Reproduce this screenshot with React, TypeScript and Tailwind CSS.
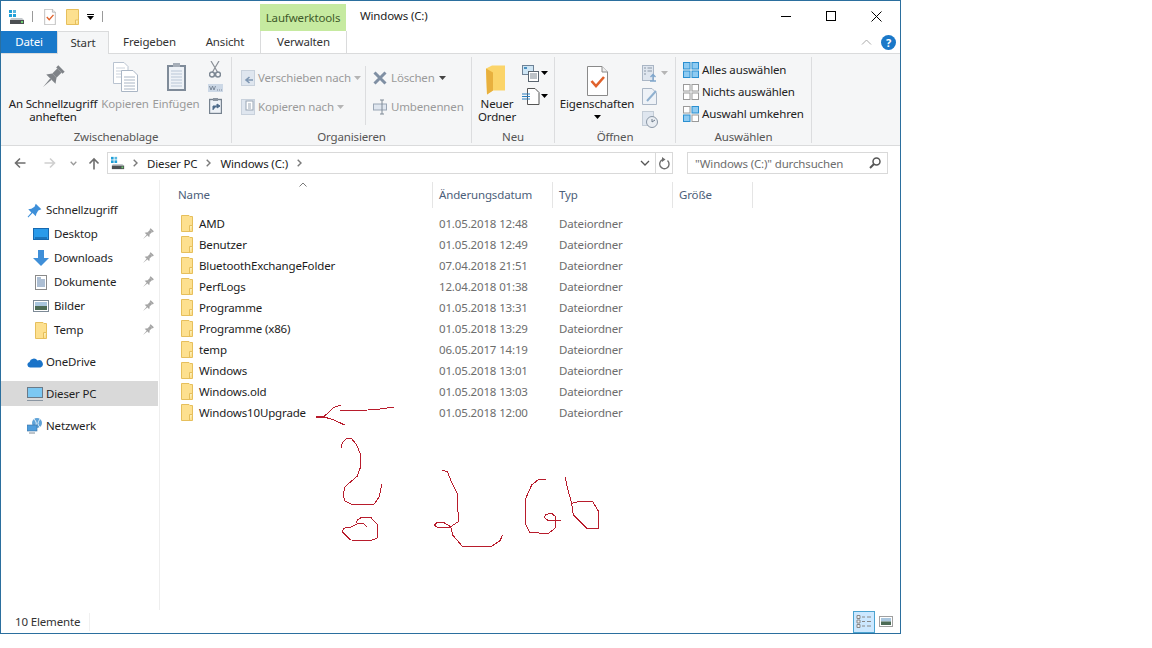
import React from "react";

const Pin = ({ size, color }: { size: number; color: string }) => (
  <svg width={size} height={size} viewBox="0 0 24 24">
    <g transform="rotate(45 12 12)" fill={color}>
      <rect x="7.5" y="0" width="9" height="3" />
      <rect x="9" y="3" width="6" height="7" />
      <path d="M5.5 15 L9 10 H15 L18.5 15 Z" />
      <path d="M11 15 H13 L12 26 Z" />
    </g>
  </svg>
);

const FolderSmall = () => (
  <svg width="14" height="17" viewBox="0 0 14 17" className="shrink-0">
    <path d="M1.5 .5 H9 L10 1.5 H12.5 V16.5 H1.5 Z" fill="#fde08f" stroke="#e6bf5c" />
    <path d="M9.5 16 V10.5 H12.5" fill="#fbeeb8" stroke="#e6bf5c" />
  </svg>
);

const Drive = ({ w = 16 }: { w?: number }) => (
  <svg width={w} height="14" viewBox="0 0 16 14" className="shrink-0">
    <rect x="0" y="0" width="3" height="3" fill="#1f9fd8" />
    <rect x="4" y="0" width="3" height="3" fill="#5bb8e0" />
    <rect x="0" y="4" width="3" height="3" fill="#1f9fd8" />
    <rect x="4" y="4" width="3" height="3" fill="#1f9fd8" />
    <path d="M2 8 H13 L15 10 H1 Z" fill="#c4c8cc" />
    <rect x="1" y="10" width="14" height="4" fill="#4c4f52" />
    <rect x="12" y="11" width="2" height="2" fill="#6fd06f" />
  </svg>
);

const Caret = ({ c = "#000" }: { c?: string }) => (
  <svg width="7" height="4" viewBox="0 0 7 4" className="shrink-0">
    <path d="M0 0 H7 L3.5 4 Z" fill={c} />
  </svg>
);

const Chev = ({ c = "#7a7a7a" }: { c?: string }) => (
  <svg width="5" height="8" viewBox="0 0 5 8" className="shrink-0 mx-[8px]">
    <path d="M.7 .7 L4 4 L.7 7.3" fill="none" stroke={c} strokeWidth="1.4" />
  </svg>
);

const CheckDoc = ({ w, h }: { w: number; h: number }) => (
  <svg width={w} height={h} viewBox="0 0 21 30" className="shrink-0">
    <path d="M.5 .5 H15 L20.5 6 V29.5 H.5 Z" fill="#fff" stroke="#8a8a8a" />
    <path d="M15 .5 V6 H20.5" fill="#eee" stroke="#8a8a8a" />
    <path d="M4.5 15 L9 20 L17 11" fill="none" stroke="#e0622c" strokeWidth="2.6" />
  </svg>
);

const Big = ({
  w,
  icon,
  children,
  disabled,
}: {
  w: string;
  icon: React.ReactNode;
  children: React.ReactNode;
  disabled?: boolean;
}) => (
  <div className={`${w} flex flex-col items-center shrink-0`}>
    <div className="h-[40px] flex items-center justify-center">{icon}</div>
    <div className={`text-center leading-[13px] whitespace-nowrap ${disabled ? "text-[#9a9a9a]" : "text-[#222]"}`}>
      {children}
    </div>
  </div>
);

const Group = ({ w, label, children }: { w: string; label: string; children: React.ReactNode }) => (
  <div className={`${w} shrink-0 h-[86px] border-r border-[#dcdddf] flex flex-col`}>
    <div className="h-[74px] shrink-0 flex">{children}</div>
    <div className="h-[12px] shrink-0 leading-[12px] text-center text-[#555]">{label}</div>
  </div>
);

const PagesIcon = () => (
  <svg width="25" height="30" viewBox="0 0 25 30">
    <path d="M.5 .5 H11 L15 4.5 V21.5 H.5 Z" fill="#fff" stroke="#b9c3d0" />
    <path d="M3 6 H12 M3 9 H12 M3 12 H12 M3 15 H12" stroke="#ccd3dc" />
    <path d="M8.5 8.5 H20 L24.5 13 V29.5 H8.5 Z" fill="#fff" stroke="#aab6c5" />
    <path d="M11 15 H22 M11 18 H22 M11 21 H22 M11 24 H22 M11 27 H22" stroke="#aab6c5" />
  </svg>
);

const ClipIcon = () => (
  <svg width="21" height="30" viewBox="0 0 21 30">
    <rect x="1" y="3" width="19" height="26" fill="#7f8b99" />
    <rect x="3" y="5" width="15" height="22" fill="#eef2f7" />
    <path d="M5 9 H16 M5 12 H16 M5 15 H16 M5 18 H16 M5 21 H16 M5 24 H16" stroke="#b9c6d6" />
    <rect x="7" y="1" width="7" height="4" fill="#a6aeb8" />
  </svg>
);

const FileRow = ({ name, date }: { name: string; date: string }) => (
  <div className="flex h-[21px] items-center text-[#1c1c1c]">
    <div className="w-[258px] flex items-center gap-[5px] -ml-[1px] mr-[1px] shrink-0">
      <FolderSmall />
      <span>{name}</span>
    </div>
    <div className="w-[120px] text-[#6d6d6d] shrink-0">{date}</div>
    <div className="text-[#6d6d6d]">Dateiordner</div>
  </div>
);

const NavRow = ({
  icon,
  label,
  pin,
  sub,
  active,
}: {
  icon: React.ReactNode;
  label: string;
  pin?: boolean;
  sub?: boolean;
  active?: boolean;
}) => (
  <div className={`flex items-center ${active ? "bg-[#d9d9d9] h-[25px]" : "h-[24px]"}`}>
    <div className={`${sub ? "w-[53px] pl-[27px]" : "w-[45px] pl-[22px]"} shrink-0 flex items-center justify-center`}>{icon}</div>
    <span className="flex-1 text-[#1f1f1f]">{label}</span>
    {pin && (
      <span className="mr-[2px] w-[16px] flex justify-center">
        <Pin size={12} color="#a3a3a3" />
      </span>
    )}
  </div>
);

const files: [string, string][] = [
  ["AMD", "01.05.2018 12:48"],
  ["Benutzer", "01.05.2018 12:49"],
  ["BluetoothExchangeFolder", "07.04.2018 21:51"],
  ["PerfLogs", "12.04.2018 01:38"],
  ["Programme", "01.05.2018 13:31"],
  ["Programme (x86)", "01.05.2018 13:29"],
  ["temp", "06.05.2017 14:19"],
  ["Windows", "01.05.2018 13:01"],
  ["Windows.old", "01.05.2018 13:03"],
  ["Windows10Upgrade", "01.05.2018 12:00"],
];

const SelIcon = ({ on }: { on: boolean[] }) => (
  <svg width="16" height="16" viewBox="0 0 16 16" className="shrink-0">
    {[
      [0, 0],
      [8.5, 0],
      [0, 8.5],
      [8.5, 8.5],
    ].map(([x, y], i) => (
      <rect
        key={i}
        x={x + 0.5}
        y={y + 0.5}
        width="6.5"
        height="6.5"
        fill={on[i] ? "#8ecbf2" : "#fff"}
        stroke={on[i] ? "#2a8fd0" : "#9a9a9a"}
      />
    ))}
  </svg>
);

export default function App() {
  return (
    <div
      className="relative w-[1152px] h-[648px] bg-white text-[11.5px] tracking-[-0.15px] overflow-hidden"
      style={{ fontFamily: '"Noto Sans", sans-serif' }}
    >
      <div className="w-[901px] h-[634px] border border-[#2b6f9e] flex flex-col">
        {/* title row */}
        <div className="h-[30px] flex shrink-0">
          <div className="w-[259px] shrink-0 flex items-center pl-[8px] pt-[1px]">
            <Drive />
            <span className="ml-[7px] w-px h-[11px] bg-[#9a9a9a]" />
            <span className="ml-[11px]"><CheckDoc w={12} h={16} /></span>
            <span className="ml-[10px]">
              <svg width="13" height="16" viewBox="0 0 13 16">
                <path d="M.5 .5 H12.5 V15.5 H.5 Z" fill="#fde08f" stroke="#e6bf5c" />
                <path d="M9.5 15 V11 H12.5" fill="#fbeeb8" stroke="#e6bf5c" />
              </svg>
            </span>
            <span className="ml-[8px] flex flex-col items-center gap-[1px]">
              <span className="w-[7px] h-px bg-black" />
              <Caret />
            </span>
            <span className="ml-[8px] w-px h-[11px] bg-[#9a9a9a]" />
          </div>
          <div className="w-[86px] h-[27px] mt-[3px] bg-[#c6eaa0] flex items-center justify-center text-[#3f5a2a] shrink-0">
            Laufwerktools
          </div>
          <div className="ml-[14px] flex-1 flex items-center text-[#222]">Windows (C:)</div>
          <div className="flex items-center pr-[18px] gap-[35px]">
            <span className="w-[10px] h-px bg-black" />
            <span className="w-[10px] h-[10px] border border-black" />
            <svg width="11" height="11" viewBox="0 0 11 11">
              <path d="M.5 .5 L10.5 10.5 M10.5 .5 L.5 10.5" stroke="#000" />
            </svg>
          </div>
        </div>
        {/* tabs row */}
        <div className="h-[23px] flex shrink-0 border-b border-[#dadbdc] items-stretch text-[#333]">
          <div className="w-[56px] bg-[#1979ca] text-white flex items-center justify-center">Datei</div>
          <div className="w-[52px] h-[23px] bg-[#f5f6f7] border border-b-0 border-[#dadbdc] flex items-center justify-center">
            Start
          </div>
          <div className="w-[81px] flex items-center justify-center">Freigeben</div>
          <div className="w-[70px] flex items-center justify-center">Ansicht</div>
          <div className="w-[87px] bg-white border-x border-[#dadbdc] flex items-center justify-center">Verwalten</div>
          <div className="flex-1 flex items-center justify-end pr-[4px] gap-[9px]">
            <svg width="11" height="6" viewBox="0 0 11 6">
              <path d="M1 5.5 L5.5 1 L10 5.5" fill="none" stroke="#a8a8a8" />
            </svg>
            <span className="w-[15px] h-[15px] rounded-full bg-[#1a78c8] text-white font-bold text-[11px] leading-[15px] text-center">
              ?
            </span>
          </div>
        </div>
        {/* ribbon */}
        <div className="h-[92px] shrink-0 bg-[#f5f6f7] border-b border-[#dadbdc] flex items-center">
          <Group w="w-[231px]" label="Zwischenablage">
            <Big w="w-[96px] ml-[4px]" icon={<Pin size={24} color="#7f8388" />}>
              An Schnellzugriff
              <br />
              anheften
            </Big>
            <Big w="w-[48px]" disabled icon={<PagesIcon />}>Kopieren</Big>
            <Big w="w-[54px]" disabled icon={<ClipIcon />}>Einfügen</Big>
            <div className="flex flex-col items-center pt-[4px] gap-[6px] w-[22px] ml-[1px]">
              <svg width="12" height="17" viewBox="0 0 12 17">
                <path d="M2 0 L8.5 11 M10 0 L3.5 11" stroke="#8a8f96" strokeWidth="1.2" />
                <circle cx="3" cy="13.5" r="2.5" fill="none" stroke="#7d8894" strokeWidth="1.5" />
                <circle cx="9" cy="13.5" r="2.5" fill="none" stroke="#7d8894" strokeWidth="1.5" />
              </svg>
              <svg width="15" height="8" viewBox="0 0 15 8">
                <rect width="15" height="8" fill="#ccd8e6" />
                <path d="M1.5 2 L3 6 L4.5 2 L6 6 L7.5 2 M9 6 H10 M11 6 H12 M13 6 H14" stroke="#6c7a8a" fill="none" strokeWidth=".8" />
              </svg>
              <svg width="13" height="16" viewBox="0 0 13 16">
                <rect x=".5" y="1.5" width="12" height="14" fill="#eef2f7" stroke="#76828f" strokeWidth="1.4" />
                <rect x="4" y="0" width="5" height="3" fill="#8a94a0" />
                <path d="M4 12 V8 H8 M8 6 L11 8 L8 10 Z" fill="#4d6a8a" stroke="#4d6a8a" />
              </svg>
            </div>
          </Group>
          <Group w="w-[240px]" label="Organisieren">
            <div className="w-[133px] shrink-0 pl-[9px] pt-[10px] flex flex-col gap-[7px] text-[#9a9a9a]">
              <div className="h-[22px] flex items-center gap-[3px] whitespace-nowrap">
                <svg width="14" height="16" viewBox="0 0 14 16" className="shrink-0">
                  <rect x=".5" y=".5" width="13" height="15" fill="#dfe6ef" stroke="#c8d1dc" />
                  <path d="M12 10 H6 M8.5 7 L5 10 L8.5 13" stroke="#7f97b3" strokeWidth="1.6" fill="none" />
                </svg>
                <span>Verschieben nach</span>
                <Caret c="#b5b5b5" />
              </div>
              <div className="h-[22px] flex items-center gap-[3px] whitespace-nowrap">
                <svg width="14" height="16" viewBox="0 0 14 16" className="shrink-0">
                  <rect x=".5" y=".5" width="13" height="15" fill="#dfe6ef" stroke="#c8d1dc" />
                  <rect x="5" y="2" width="7" height="9" fill="#fff" stroke="#9aa6b5" />
                  <path d="M7 5 H10 M7 7 H10 M7 9 H10" stroke="#9aa6b5" />
                </svg>
                <span>Kopieren nach</span>
                <Caret c="#b5b5b5" />
              </div>
            </div>
            <div className="w-px h-[59px] mt-[9px] bg-[#dcdddf] shrink-0" />
            <div className="pl-[7px] pt-[10px] flex flex-col gap-[7px] text-[#9a9a9a]">
              <div className="h-[22px] flex items-center gap-[4px]">
                <svg width="14" height="14" viewBox="0 0 14 14" className="shrink-0">
                  <path d="M1.5 1.5 L12.5 12.5 M12.5 1.5 L1.5 12.5" stroke="#7f8fa3" strokeWidth="3" />
                </svg>
                <span>Löschen</span>
                <Caret c="#444" />
              </div>
              <div className="h-[22px] flex items-center gap-[4px] whitespace-nowrap">
                <svg width="14" height="16" viewBox="0 0 14 16" className="shrink-0">
                  <rect x=".5" y="5" width="13" height="6" fill="#dfe6ef" stroke="#9aa6b5" />
                  <path d="M9 1 V15 M7 1 H11 M7 15 H11" stroke="#7f8a96" fill="none" />
                </svg>
                <span>Umbenennen</span>
              </div>
            </div>
          </Group>
          <Group w="w-[83px]" label="Neu">
            <Big
              w="w-[50px]"
              icon={
                <svg width="20" height="31" viewBox="0 0 20 30" className="mt-[7px] -ml-[3px]">
                  <path d="M0 3 L6 0 H19 V25 H7 L1 29 Z" fill="#fbd469" />
                  <path d="M0 3 L7 7 V25 L1 29 Z" fill="#e8b03e" />
                </svg>
              }
            >
              Neuer
              <br />
              Ordner
            </Big>
            <div className="flex flex-col pt-[8px] gap-[6px]">
              <div className="flex items-center gap-[1px]">
                <svg width="18" height="17" viewBox="0 0 18 17">
                  <rect x=".5" y=".5" width="11" height="9" fill="#cfe6f5" stroke="#6e8296" />
                  <rect x="2" y="2" width="3" height="2" fill="#4a90c0" />
                  <rect x="6.5" y="6.5" width="10" height="10" fill="#fff" stroke="#5a6570" />
                  <path d="M8 9 H15 M8 11 H15 M8 13 H15" stroke="#7a8590" />
                </svg>
                <Caret />
              </div>
              <div className="flex items-center gap-[1px]">
                <svg width="18" height="17" viewBox="0 0 18 17">
                  <path d="M5.5 .5 H13 L17 4.5 V16.5 H5.5 Z" fill="#fff" stroke="#555" />
                  <path d="M0 6 H8 M0 8.5 H8 M0 11 H8" stroke="#2a7fc0" />
                </svg>
                <Caret />
              </div>
            </div>
          </Group>
          <Group w="w-[121px]" label="Öffnen">
            <div className="w-[84px] shrink-0 flex flex-col items-center text-[#222]">
              <div className="h-[40px] flex items-center">
                <span className="mt-[8px]"><CheckDoc w={21} h={30} /></span>
              </div>
              <div className="leading-[13px] whitespace-nowrap">Eigenschaften</div>
              <div className="mt-[5px] leading-none"><Caret /></div>
            </div>
            <div className="pl-[3px] pt-[8px] flex flex-col gap-[6px]">
              <div className="flex items-center gap-[3px] h-[17px]">
                <svg width="16" height="17" viewBox="0 0 16 17">
                  <rect x=".5" y=".5" width="11" height="15" fill="#dfe6ef" stroke="#aab6c5" />
                  <path d="M2 3 H4 M5.5 3 H10 M2 6 H4 M5.5 6 H10 M2 9 H4" stroke="#8a97a6" />
                  <path d="M8 16 H14 M11 10 V16 M8.5 12 L11 9.5 L13.5 12" stroke="#7fa6cc" fill="none" strokeWidth="1.3" />
                </svg>
                <Caret c="#b5b5b5" />
              </div>
              <svg width="16" height="17" viewBox="0 0 16 17">
                <path d="M.5 .5 H10 L14.5 5 V16.5 H.5 Z" fill="#eef2f7" stroke="#aab6c5" />
                <path d="M5 13 L14 3" stroke="#8fb0cf" strokeWidth="2" />
              </svg>
              <svg width="16" height="17" viewBox="0 0 16 17">
                <rect x=".5" y=".5" width="11" height="14" fill="#dfe6ef" stroke="#c3ccd6" />
                <circle cx="10" cy="11" r="5.5" fill="#e9edf2" stroke="#8a97a6" />
                <path d="M10 8 V11 L13 9" stroke="#6c7a8a" fill="none" />
              </svg>
            </div>
          </Group>
          <Group w="w-[136px]" label="Auswählen">
            <div className="pl-[7px] pt-[2px] flex flex-col text-[#222]">
              <div className="h-[22px] flex items-center gap-[3px] whitespace-nowrap">
                <SelIcon on={[true, true, true, true]} />
                <span>Alles auswählen</span>
              </div>
              <div className="h-[22px] flex items-center gap-[3px] whitespace-nowrap">
                <SelIcon on={[false, false, false, false]} />
                <span>Nichts auswählen</span>
              </div>
              <div className="h-[22px] flex items-center gap-[3px] whitespace-nowrap">
                <SelIcon on={[false, true, true, false]} />
                <span>Auswahl umkehren</span>
              </div>
            </div>
          </Group>
        </div>
        {/* address bar */}
        <div className="h-[34px] shrink-0 flex items-start pt-[6px]">
          <div className="w-[106px] h-[22px] shrink-0 flex items-center pl-[13px]">
            <svg width="12" height="12" viewBox="0 0 12 12">
              <path d="M11.5 6 H1.5 M6 1.5 L1.5 6 L6 10.5" fill="none" stroke="#6e6e6e" strokeWidth="1.6" />
            </svg>
            <svg width="12" height="12" viewBox="0 0 12 12" className="ml-[18px]">
              <path d="M.5 6 H10.5 M6 1.5 L10.5 6 L6 10.5" fill="none" stroke="#cfcfcf" strokeWidth="1.6" />
            </svg>
            <svg width="7" height="5" viewBox="0 0 7 5" className="ml-[14px]">
              <path d="M.7 .7 L3.5 3.7 L6.3 .7" fill="none" stroke="#9a9a9a" strokeWidth="1.3" />
            </svg>
            <svg width="12" height="13" viewBox="0 0 12 13" className="ml-[11px]">
              <path d="M6 12.5 V2 M1.5 6.5 L6 2 L10.5 6.5" fill="none" stroke="#6e6e6e" strokeWidth="1.6" />
            </svg>
          </div>
          <div className="w-[566px] h-[22px] shrink-0 border border-[#d9d9d9] flex items-center pl-[3px] text-[#222]">
            <Drive w={14} />
            <Chev />
            <span className="px-[1px] pt-[2px]">Dieser PC</span>
            <Chev />
            <span className="px-[1px] pt-[2px]">Windows (C:)</span>
            <Chev />
            <span className="flex-1" />
            <svg width="10" height="6" viewBox="0 0 10 6" className="mr-[5px]">
              <path d="M1 1 L5 5 L9 1" fill="none" stroke="#555" strokeWidth="1.3" />
            </svg>
            <span className="w-[17px] h-[20px] border-l border-[#d9d9d9] flex items-center justify-center">
              <svg width="12" height="13" viewBox="0 0 12 13">
                <path d="M9.5 3.5 A4.7 4.7 0 1 1 5 2.5" fill="none" stroke="#6e6e6e" strokeWidth="1.4" />
                <path d="M4 0 L7.5 2.5 L4 5 Z" fill="#6e6e6e" />
              </svg>
            </span>
          </div>
          <div className="ml-[14px] w-[201px] h-[22px] shrink-0 border border-[#d9d9d9] flex items-center pl-[7px] pr-[6px] text-[#6d6d6d]">
            <span className="flex-1 whitespace-nowrap pt-[2px]">"Windows (C:)" durchsuchen</span>
            <svg width="12" height="12" viewBox="0 0 12 12">
              <circle cx="7.5" cy="4.5" r="3.5" fill="none" stroke="#555" strokeWidth="1.5" />
              <path d="M5 7 L1 11" stroke="#555" strokeWidth="2" />
            </svg>
          </div>
        </div>
        {/* main */}
        <div className="flex-1 flex min-h-0">
          <div className="w-[157px] shrink-0 flex flex-col pt-[18px]">
            <NavRow
              icon={
                <svg width="15" height="15" viewBox="0 0 24 24">
                  <path d="M14 1 L23 10 L18 12 L15 17 L14 21 L9 16 L2 23 L1 22 L7 15 L2 10 L7 9 L12 6 Z" fill="#3d8fd9" />
                </svg>
              }
              label="Schnellzugriff"
            />
            <NavRow
              sub
              pin
              icon={
                <svg width="16" height="12" viewBox="0 0 16 12">
                  <rect x=".5" y=".5" width="15" height="11" fill="#2a9bea" stroke="#1668b0" />
                  <path d="M2 10 H14" stroke="#0f4f8a" />
                </svg>
              }
              label="Desktop"
            />
            <NavRow
              sub
              pin
              icon={
                <svg width="16" height="16" viewBox="0 0 16 16">
                  <path d="M5 0 H11 V8 H16 L8 16 L0 8 H5 Z" fill="#3f8fd8" />
                </svg>
              }
              label="Downloads"
            />
            <NavRow
              sub
              pin
              icon={
                <svg width="12" height="15" viewBox="0 0 12 15">
                  <rect x=".5" y=".5" width="11" height="14" fill="#fff" stroke="#8a8a8a" />
                  <path d="M2 3 H6 M2 5 H10 M2 7 H10 M2 9 H10 M2 11 H10" stroke="#5a7ea8" />
                </svg>
              }
              label="Dokumente"
            />
            <NavRow
              sub
              pin
              icon={
                <svg width="16" height="12" viewBox="0 0 16 12">
                  <rect x=".5" y=".5" width="15" height="11" fill="#fff" stroke="#7d8a96" />
                  <rect x="2" y="2" width="12" height="4" fill="#a9c6de" />
                  <rect x="2" y="6" width="12" height="4" fill="#4c6b55" />
                </svg>
              }
              label="Bilder"
            />
            <NavRow sub pin icon={<FolderSmall />} label="Temp" />
            <div className="h-[8px]" />
            <NavRow
              icon={
                <svg width="16" height="11" viewBox="0 0 16 11">
                  <path d="M3 10.5 A2.8 2.8 0 0 1 2.5 5 A4.5 4.5 0 0 1 10.5 3.5 A3.5 3.5 0 0 1 13.5 10.5 Z" fill="#1a73c8" />
                </svg>
              }
              label="OneDrive"
            />
            <div className="h-[7px]" />
            <NavRow
              active
              icon={
                <svg width="16" height="14" viewBox="0 0 16 14">
                  <rect x=".5" y=".5" width="15" height="10" fill="#7cc8f2" stroke="#6a7a88" />
                  <path d="M0 13.5 H16" stroke="#8a96a2" />
                </svg>
              }
              label="Dieser PC"
            />
            <div className="h-[8px]" />
            <NavRow
              icon={
                <svg width="16" height="16" viewBox="0 0 16 16">
                  <circle cx="10" cy="5" r="5" fill="#5fa3d8" />
                  <path d="M7 1 Q11 5 8 9 M13 1 Q9 6 13 9" stroke="#dfeef8" fill="none" />
                  <rect x="0" y="7" width="10" height="6" fill="#4f9ddc" stroke="#3a6f9e" strokeWidth=".6" />
                  <path d="M2 15 H8" stroke="#7d8a96" />
                </svg>
              }
              label="Netzwerk"
            />
          </div>
          <div className="flex-1 ml-[1px] pl-[11px] border-l border-[#eeeeee] min-w-0">
            <div className="h-[26px] mt-[2px] flex items-stretch text-[#4c607a] relative">
              <div className="w-[262px] pl-[7px] border-r border-[#e5e5e5] flex items-center shrink-0">Name</div>
              <div className="w-[120px] pl-[6px] border-r border-[#e5e5e5] flex items-center shrink-0">Änderungsdatum</div>
              <div className="w-[120px] pl-[6px] border-r border-[#e5e5e5] flex items-center shrink-0">Typ</div>
              <div className="w-[80px] pl-[6px] border-r border-[#e5e5e5] flex items-center shrink-0">Größe</div>
              <svg width="8" height="5" viewBox="0 0 8 5" className="absolute left-[128px] top-0">
                <path d="M.5 4.5 L4 1 L7.5 4.5" fill="none" stroke="#7a7a7a" />
              </svg>
            </div>
            <div className="pt-[5px] pl-[10px]">
              {files.map(([n, d]) => (
                <FileRow key={n} name={n} date={d} />
              ))}
            </div>
          </div>
        </div>
        {/* status bar */}
        <div className="h-[23px] shrink-0 flex items-center pl-[14px] text-[#333]">
          <span className="w-[74px]">10 Elemente</span>
          <span className="w-px h-[18px] bg-[#f0f0f0]" />
          <span className="flex-1" />
          <span className="w-[22px] h-[22px] bg-[#cce8ff] border border-[#4ba3d0] flex items-center justify-center">
            <svg width="16" height="13" viewBox="0 0 16 13">
              <path d="M1 .5 H4 V3.5 H1 Z M1 5 H4 V8 H1 Z M1 9.5 H4 V12.5 H1 Z" fill="#f0f0f0" stroke="#888" />
              <path d="M6 2 H9 M11 2 H15 M6 6.5 H9 M11 6.5 H15 M6 11 H9 M11 11 H15" stroke="#888" />
            </svg>
          </span>
          <span className="ml-[4px] mr-[7px]">
            <svg width="14" height="11" viewBox="0 0 14 11">
              <rect x=".5" y=".5" width="13" height="10" fill="#fff" stroke="#a0a0a0" />
              <rect x="2" y="2" width="10" height="3.5" fill="#a9c6de" />
              <rect x="2" y="5.5" width="10" height="3.5" fill="#4c6b55" />
            </svg>
          </span>
        </div>
      </div>
      {/* hand-drawn annotation */}
      <svg
        width="320"
        height="160"
        viewBox="0 0 960 480"
        className="absolute left-[300px] top-[395px] pointer-events-none"
        fill="none"
        stroke="#b81c2c"
        strokeWidth="3"
        strokeLinejoin="round"
        shapeRendering="crispEdges"
      >
        <path d="M282 36 L240 42 L205 45 L120 46" />
        <path d="M122 30 L100 38 L72 65 L48 66" />
        <path d="M48 66 L72 66" strokeWidth="6" />
        <path d="M72 66 L100 74 L136 91" />
        <path d="M124 160 L127 143 L140 131 L155 131 L170 150 L182 180 L182 215 L172 243 L135 275 L129 300 L135 318 L155 328 L222 328 L238 305 L245 268" />
        <path d="M203 397 L190 385 L175 385 L150 397 L130 400 L128 412 L152 435 L215 436 L233 428 L233 390 L212 367 L185 367 L172 375 L168 385" />
        <path d="M427 226 L442 230 L455 262 L472 295 L475 380 L452 395 L430 382 L412 382 L403 390 L412 397 L452 396 L458 420 L487 454 L575 454 L600 437 L608 420" />
        <path d="M737 254 L715 254 L695 270 L675 315 L675 385 L690 413 L745 415 L765 400 L767 365 L755 355 L738 358 L733 368 L745 377 L785 375" />
        <path d="M796 247 L800 270 L815 325 L820 360 L860 400 L895 400 L895 348 L878 320 L835 320 L815 325" />
      </svg>
    </div>
  );
}
